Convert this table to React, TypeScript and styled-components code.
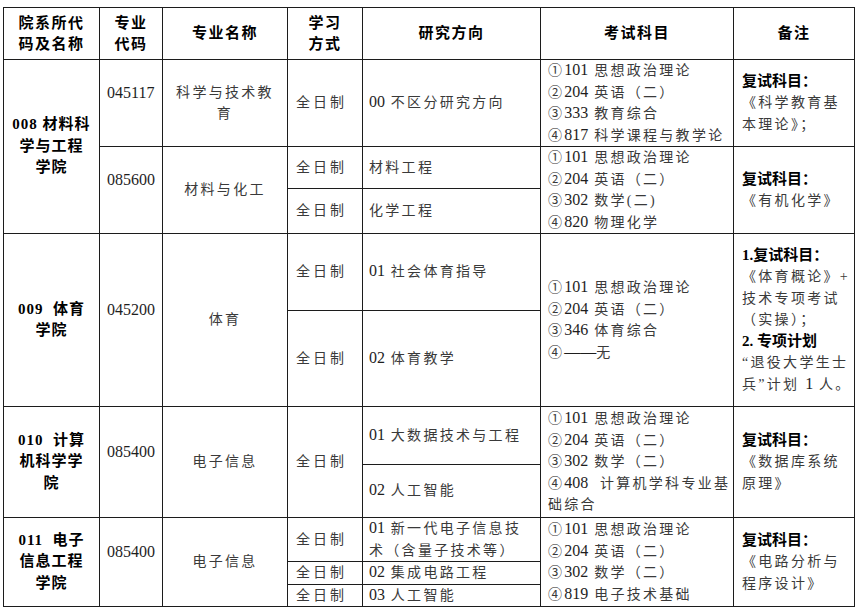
import React from "react";
import styled, { createGlobalStyle } from "styled-components";

const GlobalStyle = createGlobalStyle`
  body {
    margin: 0;
    background: #fff;
  }
`;

const cols = [96, 63, 125, 75, 178, 193, 121];

type Exam = [string, string, string];

const exam1: Exam[] = [
  ["①", "101", "思想政治理论"],
  ["②", "204", "英语（二）"],
  ["③", "333", "教育综合"],
  ["④", "817", "科学课程与教学论"],
];
const exam2: Exam[] = [
  ["①", "101", "思想政治理论"],
  ["②", "204", "英语（二）"],
  ["③", "302", "数学(二)"],
  ["④", "820", "物理化学"],
];
const exam3: Exam[] = [
  ["①", "101", "思想政治理论"],
  ["②", "204", "英语（二）"],
  ["③", "346", "体育综合"],
  ["④", "", "无"],
];
const exam4: Exam[] = [
  ["①", "101", "思想政治理论"],
  ["②", "204", "英语（二）"],
  ["③", "302", "数学（二）"],
  ["④", "408", " 计算机学科专业基\n础综合"],
];
const exam5: Exam[] = [
  ["①", "101", "思想政治理论"],
  ["②", "204", "英语（二）"],
  ["③", "302", "数学（二）"],
  ["④", "819", "电子技术基础"],
];

const ExamList = ({ items }: { items: Exam[] }) => (
  <>
    {items.map(([mark, code, text], i) => (
      <ExamLine key={i}>
        {mark}
        {code ? <Num>{code}</Num> : <Num>——</Num>}
        {code ? " " : ""}
        {text}
      </ExamLine>
    ))}
  </>
);

const Mode = () => <ModeCell>全日制</ModeCell>;

const App = () => {
  return (
    <Page>
      <GlobalStyle />
      <Table>
        <colgroup>
          {cols.map((w, i) => (
            <Col key={i} $w={w} />
          ))}
        </colgroup>
        <tbody>
          <Row $h={52}>
            <HeadCell>
              院系所代
              <br />
              码及名称
            </HeadCell>
            <HeadCell>
              专业
              <br />
              代码
            </HeadCell>
            <HeadCell>专业名称</HeadCell>
            <HeadCell>
              学习
              <br />
              方式
            </HeadCell>
            <HeadCell>研究方向</HeadCell>
            <HeadCell>考试科目</HeadCell>
            <HeadCell>备注</HeadCell>
          </Row>

          {/* 008 */}
          <Row $h={87}>
            <CollegeCell rowSpan={3}>
              008 材料科
              <br />
              学与工程
              <br />
              学院
            </CollegeCell>
            <CodeCell>
              <Num>045117</Num>
            </CodeCell>
            <NameCell>
              科学与技术教
              <br />
              育
            </NameCell>
            <Mode />
            <DirCell>
              <Num>00</Num> 不区分研究方向
            </DirCell>
            <ExamCell>
              <ExamList items={exam1} />
            </ExamCell>
            <NoteCell>
              <Strong>复试科目：</Strong>
              <br />
              《科学教育基
              <br />
              本理论》；
            </NoteCell>
          </Row>
          <Row $h={42}>
            <CodeCell rowSpan={2}>
              <Num>085600</Num>
            </CodeCell>
            <NameCell rowSpan={2}>材料与化工</NameCell>
            <Mode />
            <DirCell>材料工程</DirCell>
            <ExamCell rowSpan={2}>
              <ExamList items={exam2} />
            </ExamCell>
            <NoteCell rowSpan={2}>
              <Strong>复试科目：</Strong>
              <br />
              《有机化学》
            </NoteCell>
          </Row>
          <Row $h={45}>
            <Mode />
            <DirCell>化学工程</DirCell>
          </Row>

          {/* 009 */}
          <Row $h={77}>
            <CollegeCell rowSpan={2}>
              009&nbsp; 体育
              <br />
              学院
            </CollegeCell>
            <CodeCell rowSpan={2}>
              <Num>045200</Num>
            </CodeCell>
            <NameCell rowSpan={2}>体育</NameCell>
            <Mode />
            <DirCell>
              <Num>01</Num> 社会体育指导
            </DirCell>
            <ExamCell rowSpan={2}>
              <ExamList items={exam3} />
            </ExamCell>
            <NoteCell rowSpan={2}>
              <Strong>1.复试科目：</Strong>
              <br />
              《体育概论》+
              <br />
              技术专项考试
              <br />
              （实操）；
              <br />
              <Strong>2. 专项计划</Strong>
              <br />
              “退役大学生士
              <br />
              兵”计划 <Num>1</Num> 人。
            </NoteCell>
          </Row>
          <Row $h={96}>
            <Mode />
            <DirCell>
              <Num>02</Num> 体育教学
            </DirCell>
          </Row>

          {/* 010 */}
          <Row $h={58}>
            <CollegeCell rowSpan={2}>
              010&nbsp; 计算
              <br />
              机科学学
              <br />
              院
            </CollegeCell>
            <CodeCell rowSpan={2}>
              <Num>085400</Num>
            </CodeCell>
            <NameCell rowSpan={2}>电子信息</NameCell>
            <ModeCell rowSpan={2}>全日制</ModeCell>
            <DirCell>
              <Num>01</Num> 大数据技术与工程
            </DirCell>
            <ExamCell rowSpan={2}>
              <ExamList items={exam4} />
            </ExamCell>
            <NoteCell rowSpan={2}>
              <Strong>复试科目：</Strong>
              <br />
              《数据库系统
              <br />
              原理》
            </NoteCell>
          </Row>
          <Row $h={53}>
            <DirCell>
              <Num>02</Num> 人工智能
            </DirCell>
          </Row>

          {/* 011 */}
          <Row $h={44}>
            <CollegeCell rowSpan={3}>
              011&nbsp; 电子
              <br />
              信息工程
              <br />
              学院
            </CollegeCell>
            <CodeCell rowSpan={3}>
              <Num>085400</Num>
            </CodeCell>
            <NameCell rowSpan={3}>电子信息</NameCell>
            <Mode />
            <DirCell>
              <Num>01</Num> 新一代电子信息技
              <br />
              术（含量子技术等）
            </DirCell>
            <ExamCell rowSpan={3}>
              <ExamList items={exam5} />
            </ExamCell>
            <NoteCell rowSpan={3}>
              <Strong>复试科目：</Strong>
              <br />
              《电路分析与
              <br />
              程序设计》
            </NoteCell>
          </Row>
          <Row $h={22}>
            <Mode />
            <DirCell>
              <Num>02</Num> 集成电路工程
            </DirCell>
          </Row>
          <Row $h={22}>
            <Mode />
            <DirCell>
              <Num>03</Num> 人工智能
            </DirCell>
          </Row>
        </tbody>
      </Table>
    </Page>
  );
};

export default App;

const Page = styled.div`
  padding: 7px 0 0 3px;
  font-family: "Liberation Serif", "Noto Sans CJK SC", serif;
`;

const Table = styled.table`
  width: 851px;
  table-layout: fixed;
  border-collapse: collapse;
  border: 1px solid #000;
`;

const Col = styled.col<{ $w: number }>`
  width: ${(p) => p.$w}px;
`;

const Row = styled.tr<{ $h: number }>`
  height: ${(p) => p.$h}px;
`;

const Cell = styled.td`
  border: 1px solid #1c1c1c;
  padding: 0 7px;
  font-size: 14px;
  line-height: 21.5px;
  letter-spacing: 2.3px;
  color: #3a3a3a;
  vertical-align: middle;
  white-space: nowrap;
  overflow: hidden;
`;

const HeadCell = styled(Cell).attrs({ as: "th" })`
  font-family: "Liberation Serif", "Noto Sans CJK SC", sans-serif;
  font-weight: 700;
  font-size: 15px;
  line-height: 21px;
  letter-spacing: 1.5px;
  color: #000;
  text-align: center;
  padding: 0;
`;

const CollegeCell = styled(Cell)`
  font-weight: 700;
  font-size: 15px;
  letter-spacing: 1px;
  color: #000;
  text-align: center;
  padding: 0;
`;

const CodeCell = styled(Cell)`
  padding-bottom: 18px;
  color: #222;
`;

const NameCell = styled(Cell)`
  text-align: center;
  padding: 0;
`;

const ModeCell = styled(Cell)`
  letter-spacing: 3px;
  padding-left: 8px;
`;

const DirCell = styled(Cell)`
  padding-left: 6px;
`;

const ExamCell = styled(Cell)`
  padding-left: 7px;
`;

const ExamLine = styled.div`
  white-space: pre;
`;

const NoteCell = styled(Cell)`
  padding-left: 8px;
`;

const Num = styled.span`
  font-size: 16px;
  line-height: 1;
  letter-spacing: 0;
  color: #1e1e1e;
`;

const Strong = styled.span`
  font-weight: 700;
  font-size: 15px;
  line-height: 1;
  letter-spacing: 0;
  color: #000;
`;
